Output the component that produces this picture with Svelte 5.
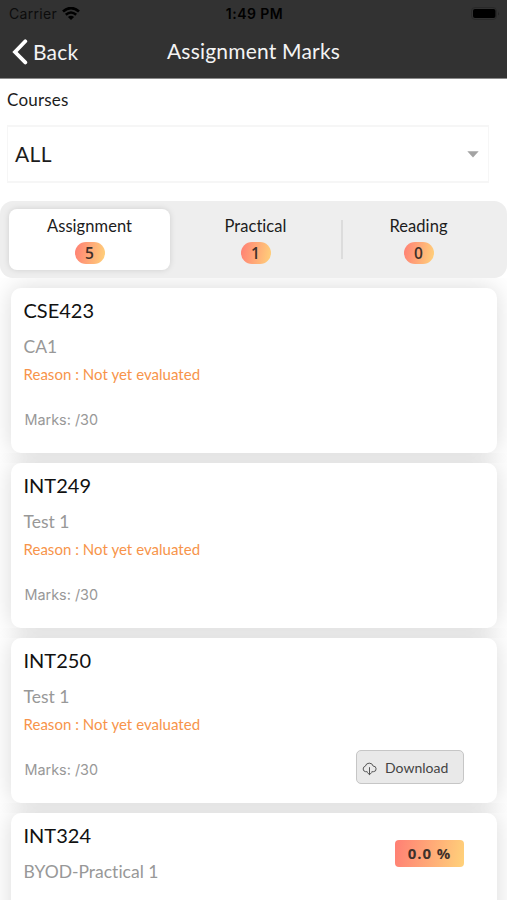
<script>
  const tabs = [
    { label: "Assignment", count: 5 },
    { label: "Practical", count: 1 },
    { label: "Reading", count: 0 },
  ];

  const assignments = [
    { code: "CSE423", title: "CA1", reason: "Not yet evaluated", marks: "/30" },
    { code: "INT249", title: "Test 1", reason: "Not yet evaluated", marks: "/30" },
    {
      code: "INT250",
      title: "Test 1",
      reason: "Not yet evaluated",
      marks: "/30",
      download: true,
    },
    { code: "INT324", title: "BYOD-Practical 1", percent: "0.0 %" },
  ];

  let activeTab = $state(0);
</script>

<div class="screen">
  <header>
    <div class="status">
      <div class="carrier">
        <span>Carrier</span>
        <svg width="18" height="14" viewBox="0 0 18 14" fill="none" stroke="#000">
          <path d="M1 4.6Q9-2.4 17 4.6" stroke-width="2.7" />
          <path d="M3.8 7.8Q9 3.2 14.2 7.8" stroke-width="2.5" />
          <path d="M9 13L5.9 9.9Q9 7.4 12.1 9.9Z" fill="#000" stroke="none" />
        </svg>
      </div>
      <span class="time">1:49 PM</span>
      <div class="battery">
        <svg width="29" height="14" viewBox="0 0 29 14">
          <rect x="0.5" y="0.5" width="25" height="12" rx="3.5" fill="none" stroke="#292929" />
          <rect x="2" y="2" width="22.5" height="9" rx="2" fill="#000" />
          <path d="M27 4.5Q28.8 6.5 27 8.5Z" fill="#242424" />
        </svg>
      </div>
    </div>
    <nav>
      <button class="back">
        <svg width="16" height="26" viewBox="0 0 16 26">
          <path
            d="M13.3 2.3L3 13L13.3 23.4"
            fill="none"
            stroke="#fff"
            stroke-width="3.8"
            stroke-linecap="round"
          />
        </svg>
        <span>Back</span>
      </button>
      <h1><span>Assignment Marks</span></h1>
      <div></div>
    </nav>
  </header>

  <section class="courses">
    <div class="label"><span>Courses</span></div>
    <div class="select">
      <span>ALL</span>
      <svg width="12" height="7" viewBox="0 0 12 7">
        <path d="M0.3 0.3H11.7L6 6.5Z" fill="#a3a3a3" />
      </svg>
    </div>
  </section>

  <div class="tabs">
    {#each tabs as tab, i}
      <button class="tab" class:active={activeTab === i} onclick={() => (activeTab = i)}>
        <span class="name">{tab.label}</span>
        <span class="count">{tab.count}</span>
      </button>
    {/each}
  </div>

  <main>
    {#each assignments as item}
      <article>
        <div class="info">
          <h2><span>{item.code}</span></h2>
          <p class="title"><span>{item.title}</span></p>
          {#if item.reason}
            <p class="reason"><span>Reason : {item.reason}</span></p>
          {/if}
          {#if item.marks}
            <p class="marks"><span>Marks: {item.marks}</span></p>
          {/if}
        </div>
        {#if item.download}
          <button class="download">
            <svg width="15" height="14" viewBox="0 0 15 14" fill="none" stroke="#555" stroke-linecap="round" stroke-linejoin="round">
              <path d="M5 9.7H3.6A2.8 2.8 0 0 1 3.3 4.2A4.1 4.1 0 0 1 11.2 4.1A2.8 2.8 0 0 1 11.4 9.7H10" />
              <path d="M7.5 5.6V12.6M5.4 10.6L7.5 12.7L9.6 10.6" />
            </svg>
            <span>Download</span>
          </button>
        {/if}
        {#if item.percent}
          <div class="percent">{item.percent}</div>
        {/if}
      </article>
    {/each}
  </main>
</div>

<style>
  :global(body) {
    margin: 0;
    background: #fff;
  }

  .screen {
    width: 507px;
    height: 900px;
    overflow: hidden;
    display: flex;
    flex-direction: column;
    font-family: Lato, "Open Sans", sans-serif;
    font-variant-ligatures: none;
    color: #1c1c1c;
  }

  button {
    border: none;
    background: none;
    padding: 0;
    margin: 0;
    font: inherit;
    color: inherit;
    cursor: pointer;
  }

  h1,
  h2,
  p {
    margin: 0;
    font-weight: 400;
  }

  svg {
    display: block;
    flex: none;
  }

  header {
    flex: none;
    box-sizing: border-box;
    height: 79px;
    background: #323232;
    border-bottom: 1px solid #8a8a8a;
  }

  .status {
    height: 26px;
    display: grid;
    grid-template-columns: 1fr auto 1fr;
    align-items: center;
    padding: 0 7px 0 9px;
    font: 14px/26px Inter, sans-serif;
    color: #0c0c0c;
  }

  .carrier {
    display: flex;
    align-items: center;
    gap: 5px;
    letter-spacing: 0.3px;
    padding-top: 1px;
  }

  .time {
    font-weight: 600;
    letter-spacing: 0.45px;
    padding-top: 1px;
    color: #000;
  }

  .battery {
    justify-self: end;
  }

  nav {
    height: 52px;
    display: grid;
    grid-template-columns: 1fr auto 1fr;
    align-items: center;
    padding: 0 12px;
    color: #f4f4f4;
  }

  .back {
    display: flex;
    align-items: center;
    justify-self: start;
    gap: 5px;
    font-size: 21px;
    line-height: 26px;
    letter-spacing: 0.2px;
  }

  h1 {
    padding-bottom: 2px;
    font-size: 21px;
    line-height: 26px;
    letter-spacing: 0.2px;
  }

  .courses {
    flex: none;
    padding: 10px 18px 0 7px;
  }

  .label {
    font-size: 17px;
    line-height: 22px;
    letter-spacing: 0.2px;
  }

  .select {
    box-sizing: border-box;
    height: 58px;
    margin-top: 14px;
    padding: 0 9px 0 7px;
    border: 2px solid #f6f6f6;
    border-width: 2px 1px 2px 1px;
    display: flex;
    align-items: center;
    justify-content: space-between;
    font-size: 21px;
    letter-spacing: 0.4px;
  }

  .select span {
    padding-bottom: 2px;
  }

  .tabs {
    flex: none;
    box-sizing: border-box;
    height: 77px;
    margin-top: 18px;
    padding: 8px 11px 8px 9px;
    border-radius: 13px;
    background: #eee;
    display: grid;
    grid-template-columns: 161px 1fr 155px;
    gap: 4px;
    z-index: 1;
  }

  .tab {
    display: flex;
    flex-direction: column;
    align-items: center;
    padding-top: 6px;
    border-radius: 8px;
  }

  .tab.active {
    background: #fff;
    box-shadow: 0 0 6px rgba(0, 0, 0, 0.13);
  }

  /* divider in front of the last tab */
  .tab:last-child {
    background: linear-gradient(#dcdcdc, #dcdcdc) 0 11px / 2px 39px no-repeat;
    border-radius: 0;
  }

  .name {
    font-size: 16.5px;
    line-height: 22px;
    letter-spacing: 0.05px;
  }

  .count {
    width: 30px;
    height: 22px;
    margin-top: 5px;
    border-radius: 11px;
    background: linear-gradient(100deg, #ff7f74, #ffd27a);
    font: 600 15.5px/22px "Open Sans", sans-serif;
    color: #40302a;
  }

  main {
    flex: 1;
    min-height: 0;
    padding: 10px 10px 0 11px;
    display: flex;
    flex-direction: column;
    gap: 10px;
  }

  /* clipped at the gap so a shadow never falls on the card before it */
  article {
    flex: none;
    box-sizing: border-box;
    height: 165px;
    padding: 10px 33px 0 12.5px;
    border-radius: 10px;
    background: #fff;
    box-shadow: 0 0 24px rgba(0, 0, 0, 0.15);
    clip-path: inset(-10px -11px);
    display: flex;
    justify-content: space-between;
  }

  h2 {
    font-size: 20px;
    line-height: 24px;
    color: #111;
  }

  .title {
    margin-top: 14px;
    font-size: 17.5px;
    line-height: 22px;
    color: #989898;
  }

  .reason {
    margin-top: 6px;
    font-size: 15px;
    line-height: 20px;
    letter-spacing: 0.03px;
    color: #f7944a;
  }

  .marks {
    margin: 26px 0 0 1px;
    font: 14.4px/20px Inter, sans-serif;
    color: #989898;
  }

  .download {
    box-sizing: border-box;
    width: 108px;
    height: 34px;
    margin-top: 102px;
    padding-left: 5px;
    border: 1px solid #c6c6c6;
    border-radius: 5px;
    background: #e9e9e9;
    display: flex;
    align-items: center;
    gap: 8px;
    font-size: 14px;
    color: #444;
  }

  .download svg {
    margin-top: 4px;
  }

  .percent {
    width: 69px;
    height: 27px;
    margin-top: 17px;
    border-radius: 4px;
    background: linear-gradient(100deg, #ff7f74, #ffd27a);
    font: 700 15px/27px "Open Sans", sans-serif;
    letter-spacing: 0.9px;
    text-align: center;
    color: #40302a;
  }
</style>
